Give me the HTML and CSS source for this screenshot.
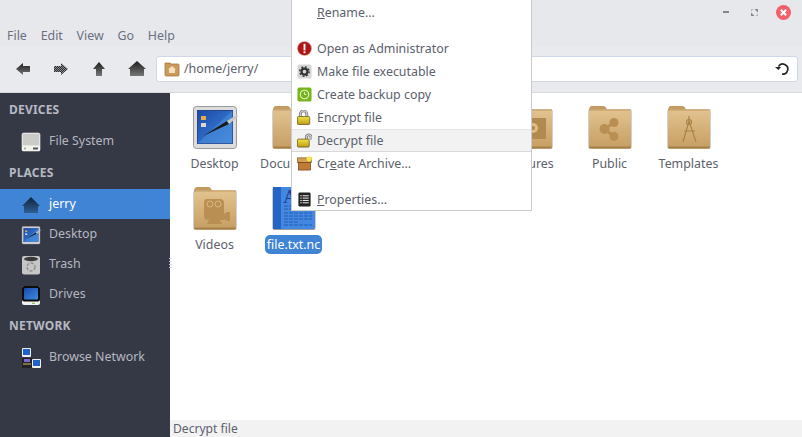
FILE: index.html
```html
<!DOCTYPE html>
<html lang="en">
<head>
<meta charset="utf-8">
<title>jerry</title>
<link rel="stylesheet" href="styles.css">
</head>
<body>
<svg class="defs" width="0" height="0" aria-hidden="true">
  <defs>
    <linearGradient id="fg" x1="0" y1="0" x2="0" y2="1"><stop offset="0" stop-color="#e2c390"/><stop offset="1" stop-color="#c69e62"/></linearGradient>
    <linearGradient id="dk" x1="0" y1="0" x2="0" y2="1"><stop offset="0" stop-color="#1c1c1e"/><stop offset="1" stop-color="#777"/></linearGradient>
    <linearGradient id="hm" x1="0" y1="0" x2="0" y2="1"><stop offset="0" stop-color="#0f2238"/><stop offset="1" stop-color="#2f5f94"/></linearGradient>
    <linearGradient id="sc" x1="0" y1="0" x2="1" y2="1"><stop offset="0" stop-color="#1b49a8"/><stop offset="1" stop-color="#3f8be0"/></linearGradient>
    <linearGradient id="lk" x1="0" y1="0" x2="0" y2="1"><stop offset="0" stop-color="#f4e24a"/><stop offset="1" stop-color="#bf9c14"/></linearGradient>
    <pattern id="dither" width="2" height="2" patternUnits="userSpaceOnUse"><rect width="2" height="2" fill="#8c8d90"/><rect width="1" height="1" fill="#2a2a2c"/><rect x="1" y="1" width="1" height="1" fill="#2a2a2c"/></pattern>
    <symbol id="folder" viewBox="0 0 48 48">
      <path d="M3 8 q0-5 3-5h11q3 0 4 4z" fill="#c39a5f"/>
      <rect x="2" y="6" width="44" height="40" rx="3" fill="#a9a9ab" opacity=".55"/>
      <rect x="3" y="6.500" width="42" height="39" rx="2.500" fill="url(#fg)"/>
      <rect x="3" y="43.500" width="42" height="2" rx="1" fill="#a58149"/>
      <rect x="3" y="6.500" width="42" height="1" fill="#c39a5f"/>
    </symbol>
    <symbol id="desk" viewBox="0 0 48 48">
      <rect x="2.500" y="3.500" width="43" height="42" rx="3" fill="#dcdcdc" stroke="#9a9a9a"/>
      <rect x="6.500" y="7.500" width="35" height="33" fill="url(#sc)" stroke="#27438a"/>
      <path d="M6.500 40.500 L24 24 L41.500 7.500 V40.500z" fill="#4d8fdc" opacity=".55"/>
      <rect x="10" y="13" width="5" height="4" fill="#e8a94a"/>
      <rect x="10" y="20" width="5" height="4" fill="#d8d8d8"/>
      <path d="M12 33 L36 18 L38 21z" fill="#1a1a1a"/>
      <path d="M36 18 L46 11.500 L47 13.500 L38 21z" fill="#c8c8c8"/>
    </symbol>
  </defs>
</svg>

<div class="window">
  <header class="titlebar">
    <span class="win-min"></span>
    <svg class="win-max" width="7" height="7" viewBox="0 0 8 8"><path d="M4 0H8V4zM0 4L4 8H0z" fill="#85868c"/><path d="M0 0H3L0 3zM8 8H5L8 5z" fill="#b9babf"/></svg>
    <svg class="win-close" width="15" height="15" viewBox="0 0 14 14"><circle cx="7" cy="7" r="7" fill="#f4606a"/><path d="M4.500 4.500l5 5M9.500 4.500l-5 5" stroke="#fff" stroke-width="2"/></svg>
  </header>

  <nav class="menubar">
    <span>File</span><span>Edit</span><span>View</span><span>Go</span><span>Help</span>
  </nav>

  <div class="toolbar">
    <div class="tools">
      <svg class="tool-back" width="14" height="12" viewBox="0 0 14 12"><path d="M0 6L7 0V3H14V9H7V12z" fill="url(#dk)"/></svg>
      <svg class="tool-fwd" width="14" height="12" viewBox="0 0 14 12"><path d="M14 6L7 0V3H0V9H7V12z" fill="url(#dither)"/></svg>
      <svg class="tool-up" width="12" height="14" viewBox="0 0 12 14"><path d="M6 0L12 7H9V14H3V7H0z" fill="url(#dk)"/></svg>
      <svg class="tool-home" width="18" height="15" viewBox="0 0 18 15"><path d="M9 0L18 8H16V15H2V8H0z" fill="url(#dk)"/></svg>
    </div>
    <div class="address">
      <svg width="16" height="16" viewBox="0 0 16 16"><path d="M1 2h5l1 1h7q1 0 1 1v10q0 1-1 1H2q-1 0-1-1z" fill="#c99a5b" stroke="#a9773a" stroke-width=".8"/><path d="M8 5l4 3.500h-1V12H5V8.500H4z" fill="#f4e0bc"/></svg>
      <span class="path">/home/jerry/</span>
      <svg class="reload" width="14" height="14" viewBox="0 0 14 14"><path d="M3.500 4.500A5 5 0 1 1 7 12" fill="none" stroke="#222" stroke-width="1.600"/><path d="M0 5H6L3.500 8z" fill="#222"/></svg>
    </div>
  </div>

  <div class="main">
    <aside class="sidebar">
      <h2 class="side-head">DEVICES</h2>
      <div class="side-item">
        <svg width="20" height="20" viewBox="0 0 20 20"><rect x="1" y="1" width="18" height="18" rx="1.500" fill="#e2e2de" stroke="#eee" stroke-width=".6"/><rect x="2" y="2" width="16" height="11" fill="#cbcbc7"/><rect x="1" y="14" width="18" height="5" rx="1" fill="#f3f3ed"/><rect x="12" y="15.500" width="5" height="2" fill="#555"/><circle cx="4" cy="16.500" r="1" fill="#8a8"/></svg>
        <span>File System</span>
      </div>
      <h2 class="side-head">PLACES</h2>
      <div class="side-item selected">
        <svg width="20" height="20" viewBox="0 0 20 20"><path d="M10 2L19 11H17V18H3V11H1z" fill="url(#hm)"/></svg>
        <span>jerry</span>
      </div>
      <div class="side-item">
        <svg width="20" height="20" viewBox="0 0 48 48"><use href="#desk"/></svg>
        <span>Desktop</span>
      </div>
      <div class="side-item">
        <svg width="20" height="20" viewBox="0 0 20 20"><rect x="1" y="1" width="18" height="18.500" rx="2" fill="#c6c6c4"/><ellipse cx="10" cy="4" rx="7" ry="2.200" fill="#3b3b3b"/><circle cx="10" cy="12" r="4" fill="none" stroke="#8f8f8d" stroke-width="1.500" stroke-dasharray="3 1.500"/></svg>
        <span>Trash</span>
      </div>
      <div class="side-item">
        <svg width="20" height="20" viewBox="0 0 20 20"><rect x="1" y="1" width="18" height="19" rx="2" fill="#f1f1f1"/><rect x="1" y="1" width="18" height="15.500" rx="2" fill="#0d0d0d"/><rect x="3" y="3" width="14" height="11.500" rx="1" fill="url(#sc)"/><rect x="11" y="17.800" width="3" height="1" fill="#7fb53a"/></svg>
        <span>Drives</span>
      </div>
      <h2 class="side-head">NETWORK</h2>
      <div class="side-item">
        <svg width="20" height="20" viewBox="0 0 20 20"><rect x="1" y="0" width="9" height="9" rx="1" fill="#eee"/><rect x="2" y="1" width="7" height="6" fill="#1f62c9"/><rect x="1" y="10" width="10" height="10" rx="1" fill="#222"/><rect x="3" y="11" width="6" height="3" fill="#7b6ad0"/><rect x="2" y="15.500" width="8" height="1" fill="#cfc65a"/><rect x="11" y="11" width="9" height="9" rx="1" fill="#f0f0f0"/><rect x="12" y="12" width="7" height="6" fill="#1f62c9"/></svg>
        <span>Browse Network</span>
      </div>
      <span class="grip"></span>
    </aside>

    <section class="content">
      <div class="files">
        <figure class="file"><svg width="48" height="48"><use href="#desk"/></svg><figcaption>Desktop</figcaption></figure>
        <figure class="file"><svg width="48" height="48"><use href="#folder"/></svg><figcaption>Documents</figcaption></figure>
        <figure class="file"><svg width="48" height="48"><use href="#folder"/></svg><figcaption>Downloads</figcaption></figure>
        <figure class="file"><svg width="48" height="48"><use href="#folder"/></svg><figcaption>Music</figcaption></figure>
        <figure class="file">
          <svg width="48" height="48"><use href="#folder"/><rect x="17" y="15" width="22" height="21" fill="#b08a50"/><circle cx="26" cy="25" r="5" fill="#dcbc88"/><circle cx="26" cy="25" r="2" fill="#b08a50"/></svg>
          <figcaption>Pictures</figcaption>
        </figure>
        <figure class="file">
          <svg width="48" height="48"><use href="#folder"/><circle cx="28" cy="19.500" r="4.500" fill="#b98f53"/><circle cx="18.500" cy="26" r="5" fill="#b98f53"/><circle cx="28" cy="33.500" r="4.500" fill="#b98f53"/><path d="M28 19.500L18.500 26L28 33.500" fill="none" stroke="#b98f53" stroke-width="3"/></svg>
          <figcaption>Public</figcaption>
        </figure>
        <figure class="file">
          <svg width="48" height="48"><use href="#folder"/><path d="M24 13V18M24 18L18 39M24 18L31 39M19 28H30" fill="none" stroke="#aa8347" stroke-width="1.200"/><circle cx="24" cy="19" r="2.500" fill="none" stroke="#aa8347" stroke-width="1.200"/></svg>
          <figcaption>Templates</figcaption>
        </figure>
        <figure class="file">
          <svg width="48" height="48"><use href="#folder"/><path d="M16 15h13q4 0 4 4v11l3-2h3v9h-3l-3-2v1h-4l2 4H16l2-4q-5 0-5-4V19q0-4 3-4z" fill="#b98f53"/><circle cx="19" cy="20" r="3" fill="none" stroke="#d8b880"/><circle cx="27" cy="20" r="3" fill="none" stroke="#d8b880"/></svg>
          <figcaption>Videos</figcaption>
        </figure>
        <figure class="file chosen">
          <svg width="48" height="48" viewBox="0 0 48 48"><rect x="2.500" y="3" width="43" height="43" rx="2" fill="#9a9a9c"/><rect x="3" y="3" width="42" height="42" rx="2" fill="#4288e2"/><rect x="3" y="3" width="8" height="42" fill="#2563c6"/><text class="doc-letter" x="13" y="19">A</text><path d="M14 22h12M14 25h12M14 29h28M14 32h28M14 35h28M14 38h14M14 41h28" stroke="#1d4c9a" stroke-opacity=".7" stroke-width="1" stroke-dasharray="4 1"/></svg>
          <figcaption>file.txt.nc</figcaption>
        </figure>
      </div>
      <footer class="status">Decrypt file</footer>
    </section>
  </div>

  <div class="context-menu">
    <div class="menu-item"><span class="mi-icon"></span><span><u>R</u>ename...</span></div>
    <div class="menu-sep"></div>
    <div class="menu-item">
      <svg class="mi-icon" viewBox="0 0 16 16"><circle cx="8" cy="8" r="7.500" fill="#b01515" stroke="#d8b5b5" stroke-width=".6"/><rect x="7" y="3" width="2" height="7" fill="#fff"/><rect x="7" y="11" width="2" height="2" fill="#fff"/></svg>
      <span>Open as Administrator</span>
    </div>
    <div class="menu-item">
      <svg class="mi-icon" viewBox="0 0 16 16"><rect x=".5" y=".5" width="15" height="15" rx="2" fill="#d5d5d5"/><circle cx="8" cy="8" r="3.200" fill="none" stroke="#333" stroke-width="2.400"/><circle cx="8" cy="8" r="5" fill="none" stroke="#333" stroke-width="1.500" stroke-dasharray="2 1.900"/></svg>
      <span>Make file executable</span>
    </div>
    <div class="menu-item">
      <svg class="mi-icon" viewBox="0 0 16 16"><rect x=".5" y=".5" width="15" height="15" rx="2" fill="#77b41e"/><circle cx="8" cy="8" r="4.500" fill="none" stroke="#e6f4c8" stroke-width="1.200"/><path d="M8 5.500V8H10" fill="none" stroke="#e6f4c8"/></svg>
      <span>Create backup copy</span>
    </div>
    <div class="menu-item">
      <svg class="mi-icon" viewBox="0 0 16 16"><path d="M3.500 8V4.500a3.500 3.500 0 0 1 7 0V8" fill="none" stroke="#777" stroke-width="3"/><path d="M3.500 8V4.500a3.500 3.500 0 0 1 7 0V8" fill="none" stroke="#d0d0d0" stroke-width="1.400"/><rect x=".5" y="7" width="13" height="8.500" rx="1" fill="url(#lk)" stroke="#5d5416" stroke-width=".8"/></svg>
      <span>Encrypt file</span>
    </div>
    <div class="menu-item active">
      <svg class="mi-icon" viewBox="0 0 16 16"><path d="M10 8V3.500a2.800 2.800 0 0 1 5 0V7" fill="none" stroke="#777" stroke-width="3"/><path d="M10 8V3.500a2.800 2.800 0 0 1 5 0V7" fill="none" stroke="#d0d0d0" stroke-width="1.400"/><rect x=".5" y="6.500" width="12.500" height="8.500" rx="1" fill="url(#lk)" stroke="#5d5416" stroke-width=".8"/></svg>
      <span>Decrypt file</span>
    </div>
    <div class="menu-item">
      <svg class="mi-icon" viewBox="0 0 16 16"><rect x=".5" y="2" width="15" height="5" fill="#d3a052" stroke="#7a5220" stroke-width=".7"/><rect x="1.500" y="7" width="13" height="8" fill="#c07a34" stroke="#6a3d14" stroke-width=".7"/><circle cx="13" cy="3" r="2.800" fill="#f6e84a"/></svg>
      <span>Cr<u>e</u>ate Archive...</span>
    </div>
    <div class="menu-sep"></div>
    <div class="menu-item">
      <svg class="mi-icon" viewBox="0 0 16 16"><rect x="1.500" y=".5" width="13" height="15" rx="1.500" fill="#222"/><path d="M3.500 4h1.500M6 4h6.500M3.500 6.500h1.500M6 6.500h6.500M3.500 9h1.500M6 9h6.500M3.500 11.500h1.500M6 11.500h6.500" stroke="#fff"/></svg>
      <span><u>P</u>roperties...</span>
    </div>
  </div>
</div>
</body>
</html>
```

FILE: styles.css
```css
* { box-sizing: border-box; }
html, body { margin: 0; height: 100%; overflow: hidden; }
body { font-family: "Noto Sans", sans-serif; font-size: 12.4px; color: #5c616c; }
.defs { position: absolute; }

.window { position: relative; display: flex; flex-direction: column; height: 437px; background: #e7e8ec; overflow: hidden; }

.titlebar { height: 24px; display: flex; align-items: center; justify-content: flex-end; padding-right: 11px; flex: none; }
.win-min { width: 6px; height: 2px; background: #85868c; margin-right: 22px; }
.win-max { margin-right: 18px; }

.menubar { height: 22px; display: flex; align-items: center; gap: 13.800px; padding-left: 7px; flex: none; color: #6a7080; }

.toolbar { height: 47px; display: flex; align-items: center; padding: 0 4px 1px 16px; border-bottom: 1px solid #d8d9dd; flex: none; background: #e9eaed; }
.tools { display: flex; align-items: center; width: 140px; flex: none; }
.tool-back { margin-right: 24px; }
.tool-fwd { margin-right: 25px; }
.tool-up { margin-right: 23px; }

.address { flex: 1; height: 26px; display: flex; align-items: center; gap: 4px; padding: 0 8px 0 7px; background: #fff; border: 1px solid #cfd7e8; border-radius: 3px; }
.path { flex: 1; }

.main { flex: 1; display: flex; min-height: 0; }

.sidebar { position: relative; width: 170px; flex: none; background: #353945; color: #b4b7c0; }
.side-head { margin: 0; height: 33px; padding-left: 9px; display: flex; align-items: center; font-size: 12px; font-weight: 700; color: #b6b9c3; letter-spacing: .2px; }
.side-item { height: 30px; display: flex; align-items: center; gap: 8px; padding-left: 21px; }
.side-item svg { margin-top: 2px; }
.side-item span { margin-bottom: 2px; }
.selected { background: #4084d6; color: #fff; }
.grip { position: absolute; left: 169px; top: 165px; width: 3px; height: 12px; background: repeating-linear-gradient(#cfd3dc 0 1px, transparent 1px 3px); }

.content { flex: 1; display: flex; flex-direction: column; background: #fff; min-width: 0; }
.files { flex: 1; display: flex; flex-wrap: wrap; align-content: flex-start; padding: 10px 0 0 5px; }
.file { margin: 0; width: 79px; height: 81px; display: flex; flex-direction: column; align-items: center; }
.file figcaption { margin-top: 3px; padding: 0 2px; line-height: 19px; border-radius: 5px; white-space: nowrap; }
.chosen figcaption { background: #4084d6; color: #fff; }
.doc-letter { font-family: "Liberation Serif", serif; font-size: 19px; fill: #1d3f8f; }
.status { height: 17px; padding-left: 3px; background: #f2f2f3; line-height: 17px; flex: none; font-size: 12.100px; }

.context-menu { position: absolute; left: 291px; top: 0; width: 241px; height: 211px; display: flex; flex-direction: column; background: #fff; border: 1px solid #c9cacd; border-top: 0; padding-top: 1px; }
.menu-item { height: 23px; display: flex; align-items: center; gap: 5px; padding-left: 5px; flex: none; }
.mi-icon { width: 15px; height: 15px; flex: none; }
.menu-sep { height: 13px; flex: none; }
.active { background: #f2f2f3; border-top: 1px solid #e4e4e6; border-bottom: 1px solid #d9d9dc; }
```
